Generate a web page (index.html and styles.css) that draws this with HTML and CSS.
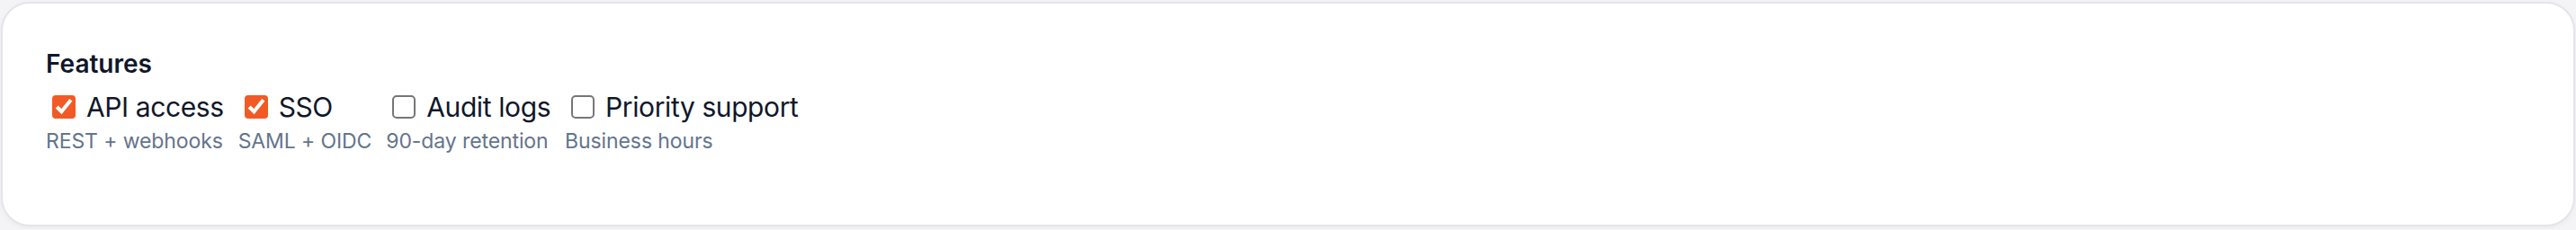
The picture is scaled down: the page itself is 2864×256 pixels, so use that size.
FILE: index.html
```html
<!DOCTYPE html>
<html lang="en">
<head>
    <meta charset="UTF-8">
    <meta name="viewport" content="width=device-width, initial-scale=1.0">
    <title>Features</title>
    <link rel="stylesheet" href="styles.css">
</head>
<body>
    <div class="card">
        <div class="title">Features</div>
        <div class="options">
            <div class="option">
                <label class="option-label"><input type="checkbox" checked> API access</label>
                <div class="hint">REST + webhooks</div>
            </div>
            <div class="option">
                <label class="option-label"><input type="checkbox" checked> SSO</label>
                <div class="hint">SAML + OIDC</div>
            </div>
            <div class="option">
                <label class="option-label"><input type="checkbox"> Audit logs</label>
                <div class="hint">90-day retention</div>
            </div>
            <div class="option">
                <label class="option-label"><input type="checkbox"> Priority support</label>
                <div class="hint">Business hours</div>
            </div>
        </div>
    </div>
</body>
</html>
```

FILE: styles.css
```css
body {
    margin: 0;
    padding: 2px 1px 3px 1px;
    background: #f4f4f7;
    font-family: Inter, "Noto Sans", sans-serif;
}
.card {
    height: 250px;
    box-sizing: border-box;
    padding: 50px 48px 48px;
    background: white;
    border: 2px solid #e4e4ea;
    border-radius: 32px;
    box-shadow: 0 2px 6px rgba(0,0,0,0.04);
}
.title {
    font-size: 28px;
    font-weight: 600;
    color: #0f172a;
    margin-bottom: 12px;
}
.options {
    display: flex;
    gap: 16px;
}
.option {
    display: flex;
    flex-direction: column;
    gap: 5px;
}
.option-label {
    display: flex;
    align-items: center;
    font-size: 30px;
    letter-spacing: -0.4px;
    color: #0f172a;
}
.option-label input {
    zoom: 2;
    accent-color: #f15a24;
    margin: 3px 6px 3px 3.5px;
}
.hint {
    font-size: 23px;
    letter-spacing: -0.1px;
    color: #64748b;
}
```
